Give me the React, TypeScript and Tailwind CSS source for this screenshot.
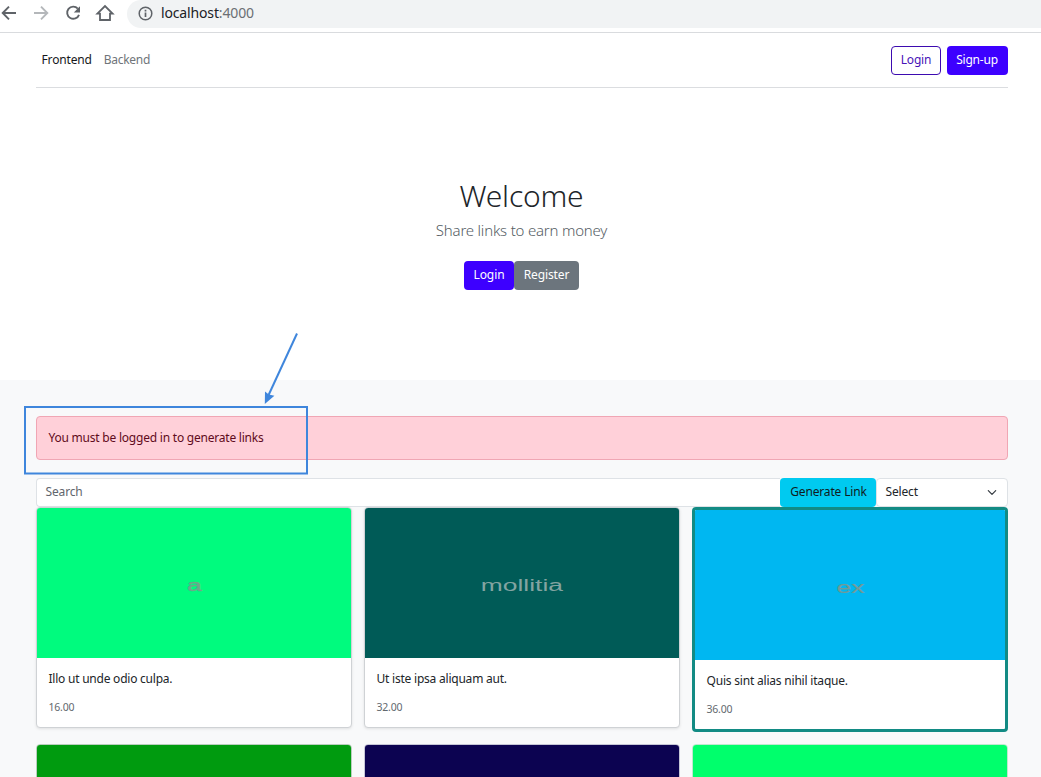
import React from 'react';

type Product = {
  title: string;
  price: string;
  word: string;
  color: string;
  wordClass: string;
  titleClass: string;
  selected?: boolean;
};

const products: Product[] = [
  { title: 'Illo ut unde odio culpa.', price: '16.00', word: 'a', color: 'bg-[#00fb7e]', wordClass: 'text-[#6da78b] pt-[6px] [-webkit-text-stroke:0.4px_#6da78b]', titleClass: 'tracking-[-0.23px]' },
  { title: 'Ut iste ipsa aliquam aut.', price: '32.00', word: 'mollitia', color: 'bg-[#005b57]', wordClass: 'text-[#83a4a1] pt-[5px]', titleClass: 'tracking-[-0.22px]' },
  { title: 'Quis sint alias nihil itaque.', price: '36.00', word: 'ex', color: 'bg-[#00b7f1]', wordClass: 'text-[#739a98] pt-[5px] [-webkit-text-stroke:0.2px_#739a98]', titleClass: 'tracking-[-0.2px]', selected: true },
];

const nextRow = [
  { fill: 'bg-[#009b0f]', border: 'border-[#b9cdbd]' },
  { fill: 'bg-[#0c0351]', border: 'border-[#c6c6d6]' },
  { fill: 'bg-[#00ff6c]', border: 'border-[#bfe8d0]' },
];

function BrowserBar() {
  return (
    <div className="flex h-[33px] shrink-0 items-start border-b border-[#d9dbde] bg-white text-[#5f6368]">
      <div className="flex h-[27px] w-[127px] shrink-0 items-center">
        <svg width="127" height="27" viewBox="0 0 127 27" fill="none" stroke="currentColor" strokeWidth="1.9">
          <path d="M16 13H3M9 6.7 2.7 13 9 19.3" />
          <path d="M34 13h13M41 6.7 47.3 13 41 19.3" stroke="#b4b7ba" />
          <path d="M77.8 8.6A6.1 6.1 0 1 0 79 14.8" />
          <path d="M80 6.2v6.2h-6.2z" fill="currentColor" stroke="none" />
          <path d="M97.4 13.6h2.6v6.4h10v-6.4h2.6L105 6z" strokeWidth="1.8" />
        </svg>
      </div>
      <div className="flex h-7 flex-1 items-center rounded-l-full bg-[#f1f3f4] pb-[2px] pl-[11px]">
        <svg width="15" height="15" viewBox="0 0 15 15" fill="none" stroke="currentColor" strokeWidth="1.5">
          <circle cx="7.5" cy="7.5" r="6.3" />
          <path d="M7.5 6.6v4.3M7.5 3.8v1.7" strokeWidth="1.7" />
        </svg>
        <span className="ml-[8px] text-[14px] leading-5 tracking-[-0.15px] text-[#202124]">
          localhost<span className="text-[#6b6f73]">:4000</span>
        </span>
      </div>
    </div>
  );
}

function Header() {
  return (
    <header className="ml-9 flex h-[55px] w-[972px] shrink-0 items-center justify-between border-b border-[#dbdde0]">
      <nav className="flex gap-3 pl-[5.5px] text-[12px] leading-[18px]">
        <a className="tracking-[-0.15px] text-[#16181b]">Frontend</a>
        <a className="tracking-[-0.3px] text-[#70757a]">Backend</a>
      </nav>
      <div className="flex gap-[6px] text-[12px] leading-[18px] tracking-[-0.2px]">
        <button className="flex h-[29px] w-[50px] items-center justify-center rounded-[4px] border border-[#3d0bb0] pb-px text-[#4713b8]">Login</button>
        <button className="flex h-[29px] w-[61px] items-center justify-center rounded-[4px] bg-[#3d00ff] pr-px pb-px text-white">Sign-up</button>
      </div>
    </header>
  );
}

function Hero() {
  return (
    <section className="flex h-[292px] shrink-0 flex-col items-center pt-[88px] pl-[2px]">
      <h1 className="text-[30px] leading-[40px] font-light tracking-[-0.2px] text-[#212529]">Welcome</h1>
      <p className="mt-[2px] text-[15px] leading-6 font-light tracking-[-0.2px] text-[#555d64]">Share links to earn money</p>
      <div className="mt-[19px] flex text-[12px] leading-[18px] tracking-[-0.1px] text-white">
        <button className="flex h-[29px] w-[50px] items-center justify-center rounded-[4px] bg-[#3d00ff] pb-px">Login</button>
        <button className="flex h-[29px] w-[65px] items-center justify-center rounded-[4px] bg-[#6c757d] pb-px">Register</button>
      </div>
    </section>
  );
}

function ProductCard({ product }: { product: Product }) {
  const frame = product.selected
    ? 'border-[3px] border-[#128b84] rounded-[4px]'
    : 'border border-[#cfd2d5] rounded-[4px] shadow-[0_1px_3px_rgba(0,0,0,0.1)]';
  return (
    <article className={`overflow-hidden bg-white ${frame}`}>
      <div className={`flex h-[150px] items-center justify-center ${product.color}`}>
        <span className={`scale-x-[1.65] font-['Liberation_Sans'] text-[16px] leading-5 ${product.wordClass}`}>{product.word}</span>
      </div>
      <div className="h-[69px] px-[11.5px] pt-[12px]">
        <p className={`text-[12px] leading-[18px] text-[#212529] ${product.titleClass}`}>{product.title}</p>
        <p className="mt-[11px] text-[10.5px] leading-4 tracking-[-0.2px] text-[#62686e]">{product.price}</p>
      </div>
    </article>
  );
}

function Catalogue() {
  return (
    <section className="flex-1 bg-[#f8f9fa] pt-9">
      <div className="ml-9 w-[972px]">
        <div className="relative flex h-11 items-center rounded-[4px] border border-[#f0a6b4] bg-[#ffd0d9] pb-px pl-[11.5px] text-[12px] text-[#5f0b20]">
          <span className="tracking-[-0.22px]">You must be logged in to generate links</span>
          <svg className="absolute -top-[85px] -left-[14px]" width="290" height="144" viewBox="0 0 290 144" fill="none" stroke="#3f86dc" strokeWidth="2">
            <rect x="2" y="75" width="282" height="66.5" />
            <path d="M274 1.5 245.6 63" />
            <path d="M241.8 72 242 59.6 245.8 62.4 251.4 63.8z" fill="#3f86dc" stroke="none" />
          </svg>
        </div>
        <div className="mt-[18px] flex h-[29px] text-[12px] tracking-[-0.15px]">
          <div className="flex flex-1 items-center rounded-l-[4px] border border-r-0 border-[#dee2e6] bg-white pb-px pl-[8.5px] text-[#5f666d]">Search</div>
          <button className="flex w-24 items-center justify-center rounded-[4px] bg-[#00caf0] pb-px pl-px text-[#101c20]">Generate Link</button>
          <div className="flex w-[132px] items-center justify-between rounded-[4px] border border-[#dee2e6] bg-white pr-[10px] pb-px pl-[8.5px] text-[#212529]">
            Select
            <svg width="10" height="10" viewBox="0 0 10 10" fill="none" stroke="#343a40" strokeWidth="1.2" strokeLinecap="round" strokeLinejoin="round">
              <path d="m1.3 3.7 3.7 3.7 3.7-3.7" />
            </svg>
          </div>
        </div>
        <div className="grid grid-cols-3 items-start gap-x-3 gap-y-3">
          {products.map((p) => <ProductCard key={p.word} product={p} />)}
          {nextRow.map((c) => (
            <article key={c.fill} className={`h-[222px] overflow-hidden rounded-[4px] border bg-white ${c.border}`}>
              <div className={`h-[150px] ${c.fill}`} />
            </article>
          ))}
        </div>
      </div>
    </section>
  );
}

export default function App() {
  return (
    <div className="flex h-[777px] w-[1041px] flex-col overflow-hidden bg-white font-['Noto_Sans',sans-serif]">
      <BrowserBar />
      <Header />
      <Hero />
      <Catalogue />
    </div>
  );
}
